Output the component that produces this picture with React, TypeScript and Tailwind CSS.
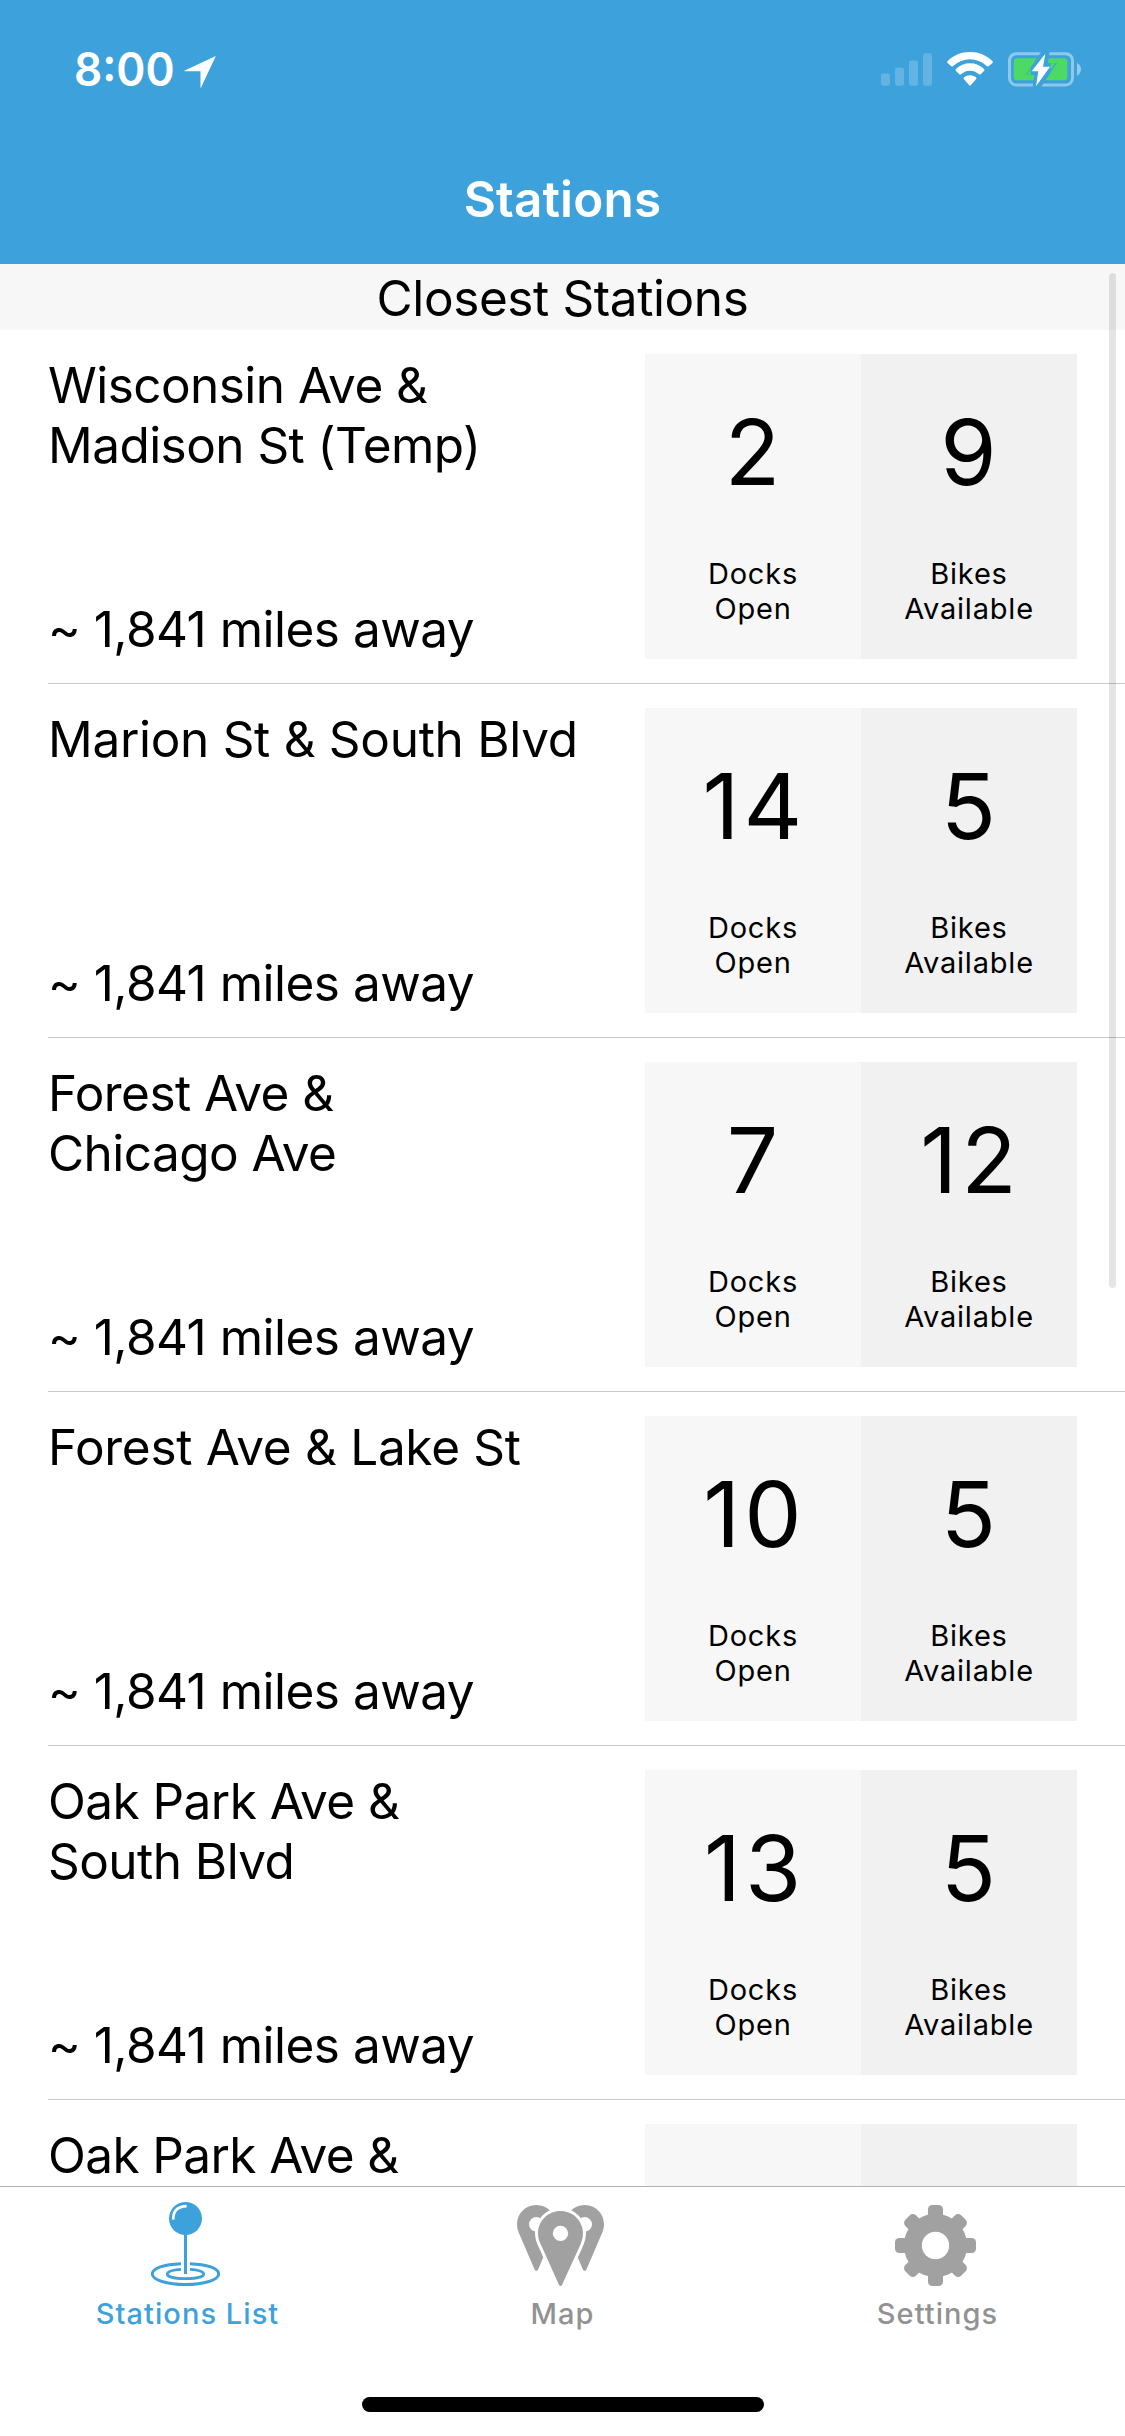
import React from "react";

type Station = { name: string; docks?: number; bikes?: number };

const stations: Station[] = [
  { name: "Wisconsin Ave &\nMadison St (Temp)", docks: 2, bikes: 9 },
  { name: "Marion St & South Blvd", docks: 14, bikes: 5 },
  { name: "Forest Ave &\nChicago Ave", docks: 7, bikes: 12 },
  { name: "Forest Ave & Lake St", docks: 10, bikes: 5 },
  { name: "Oak Park Ave &\nSouth Blvd", docks: 13, bikes: 5 },
  { name: "Oak Park Ave &" },
];

function LocationArrow() {
  return (
    <svg className="h-8 w-8" viewBox="551 167 95 96" fill="white">
      <path d="M646 167 L551 211 L553 213 H600 V263 L602 261 Z" />
    </svg>
  );
}

function SignalBars() {
  return (
    <svg className="h-[35px] w-[51px]" viewBox="243 156 153 102" fill="white" fillOpacity="0.2">
      <rect x="243" y="219" width="27" height="37" rx="7" />
      <rect x="285" y="201" width="27" height="55" rx="7" />
      <rect x="327" y="180" width="27" height="76" rx="7" />
      <rect x="369" y="158" width="27" height="98" rx="7" />
    </svg>
  );
}

function WifiIcon() {
  return (
    <svg className="h-[35px] w-[46px]" viewBox="441 155 138 105" fill="white">
      <path d="M510 155 C536 155 560 165 577 182 Q580 185 577 188 L566 198 Q563 200 560 197 Q538 177 510 177 Q482 177 460 197 Q457 200 454 198 L443 188 Q440 185 443 182 C460 165 484 155 510 155 Z" />
      <path d="M510 189 C526 189 541 195 552 206 Q555 209 552 212 L542 222 Q539 224 536 221 Q525 211 510 211 Q495 211 484 221 Q481 224 478 222 L468 212 Q465 209 468 206 C479 195 494 189 510 189 Z" />
      <path d="M510 225 C517 225 523 227 528 231 Q531 234 528 237 L513 254 Q510 257 507 254 L492 237 Q489 234 492 231 C497 227 503 225 510 225 Z" />
    </svg>
  );
}

function BatteryIcon() {
  return (
    <svg className="h-[35px] w-[73px]" viewBox="624 155 219 105">
      <rect x="628.5" y="160" width="189" height="94" rx="20" fill="none" stroke="white" strokeOpacity="0.42" strokeWidth="9" />
      <path d="M831 188 C847 196 847 217 831 226 Z" fill="white" fillOpacity="0.45" />
      <rect x="641" y="174" width="161" height="66" rx="11" fill="#4cd964" />
      <path d="M729 146 L677 224 H703 L697 268 H718 L771 188 H744 L750 146 Z" fill="#3da2dc" />
      <path d="M679 223 L693 204 L692 223 Z M766 189 L752 209 L752 189 Z" fill="#4cd964" />
      <path d="M736 160 L695 213 H715 L708 258 L750 199 H729 Z" fill="white" />
    </svg>
  );
}

function PinIcon() {
  return (
    <svg className="h-[84px] w-[69px]" viewBox="273 66 207 252" fill="none" stroke="currentColor">
      <circle cx="376.5" cy="115.5" r="49.5" fill="currentColor" stroke="none" />
      <path d="M340 119 Q338 80 380 78.500" stroke="white" strokeWidth="8" />
      <path d="M376.500 160 V282" strokeWidth="9" />
      <path d="M363 251 C312 253 277 265 277 282 C277 300 321 313.500 376.500 313.500 C432 313.500 476 300 476 282 C476 265 441 253 390 251" strokeWidth="9" />
      <path d="M363 268 C337 270 322 274 322 282 C322 291 345 296 376.500 296 C408 296 431 291 431 282 C431 274 416 270 390 268" strokeWidth="8.500" />
    </svg>
  );
}

function MapPinsIcon() {
  const sidePin =
    "M169 75 C136 75 111 101 111 133 C111 146 115 157 121 169 L164 269 Q169 276 174 269 L217 169 C223 157 227 146 227 133 C227 101 202 75 169 75 Z M169 111 A22 22 0 1 1 169 155 A22 22 0 1 1 169 111 Z";
  const frontPin =
    "M241.500 93 C204 93 174 123 174 160 C174 175 179 188 186 201 L237 315 Q241.500 321 246 315 L298 201 C304 188 309 175 309 160 C309 123 279 93 241.500 93 Z";
  return (
    <svg className="h-[84px] w-[87px]" viewBox="111 66 261 252" fill="currentColor">
      <path d={sidePin} fillRule="evenodd" />
      <path d={sidePin} fillRule="evenodd" transform="translate(483 0) scale(-1 1)" />
      <path d={frontPin} stroke="white" strokeWidth="18" />
      <path d={frontPin} />
      <circle cx="241.500" cy="160" r="23" fill="white" />
    </svg>
  );
}

function GearIcon() {
  const angles = [0, 45, 90, 135];
  return (
    <svg className="h-[84px] w-[81px]" viewBox="135 66 243 252" fill="currentColor">
      <circle cx="256.500" cy="196.500" r="95" />
      {angles.map((a) => (
        <rect
          key={a}
          x="234"
          y={a % 90 === 0 ? 75 : 78}
          width="45"
          height={a % 90 === 0 ? 243 : 237}
          rx="13"
          transform={`rotate(${a} 256.5 196.5)`}
        />
      ))}
      <circle cx="256.500" cy="196.500" r="41" fill="white" />
    </svg>
  );
}

function Count({ value, label, shade }: { value?: number; label: string; shade: string }) {
  return (
    <div className={`w-[216px] text-center ${shade}`}>
      {value !== undefined && (
        <>
          <div className="h-[202px] pl-[3px] text-[91px] leading-[196px] tracking-[4px]">{value}</div>
          <div className="text-[29px] leading-[35px] tracking-[0.8px] whitespace-pre-line">{label}</div>
        </>
      )}
    </div>
  );
}

function StationRow({ station }: { station: Station }) {
  return (
    <li className="ml-12 flex h-[354px] shrink-0 justify-between border-b border-[#c8c8c8] pt-6 pr-12 pb-6">
      <div className="flex flex-col justify-between pt-px text-[49.5px] leading-[60px]">
        <h2
          className={`whitespace-pre-line ${
            station.name.includes("\n") ? "tracking-[-0.55px]" : station.docks ? "tracking-[-0.3px]" : "tracking-[-0.6px]"
          }`}
        >
          {station.name}
        </h2>
        {station.docks !== undefined && <p className="tracking-[-0.5px]">~ 1,841 miles away</p>}
      </div>
      <div className="flex">
        <Count value={station.docks} label={"Docks\nOpen"} shade="bg-[#f7f7f7]" />
        <Count value={station.bikes} label={"Bikes\nAvailable"} shade="bg-[#f1f1f1]" />
      </div>
    </li>
  );
}

function Tab({ icon, label, color }: { icon: React.ReactNode; label: string; color: string }) {
  return (
    <div className={`flex flex-1 flex-col items-center pt-[15px] ${color}`}>
      <div className="pr-1">{icon}</div>
      <span className="mt-[9px] text-[29px] leading-[37px] font-medium tracking-[1.05px]">{label}</span>
    </div>
  );
}

export default function App() {
  return (
    <div className="flex h-[2436px] w-[1125px] flex-col overflow-hidden bg-white font-['Inter',sans-serif] text-black">
      <header className="h-[264px] shrink-0 bg-[#3da2dc] text-white">
        <div className="flex h-[132px] justify-between pr-[44px] pl-[74px]">
          <div className="flex">
            <span className="w-[110px] origin-left scale-x-[0.95] text-[46.5px] leading-[138px] font-semibold">8:00</span>
            <span className="mt-[56px]">
              <LocationArrow />
            </span>
          </div>
          <div className="flex pt-[52px]">
            <SignalBars />
            <span className="ml-[15px]">
              <WifiIcon />
            </span>
            <span className="ml-[15px]">
              <BatteryIcon />
            </span>
          </div>
        </div>
        <h1 className="h-[132px] text-center text-[49.5px] leading-[134px] font-semibold tracking-[0.15px]">Stations</h1>
      </header>

      <main className="relative flex min-h-0 flex-1 flex-col overflow-hidden">
        <div className="h-[66px] shrink-0 bg-[#f7f7f7] text-center text-[49.5px] leading-[68px] tracking-[-0.4px]">
          Closest Stations
        </div>
        <ul className="flex flex-col">
          {stations.map((s, i) => (
            <StationRow key={i} station={s} />
          ))}
        </ul>
        <div className="absolute top-[9px] right-[9px] h-[1015px] w-[7px] rounded-full bg-black/10" />
      </main>

      <nav className="flex h-[250px] shrink-0 flex-col items-center border-t border-[#b2b2b2] bg-white">
        <div className="flex h-[210px] w-full">
          <Tab icon={<PinIcon />} label="Stations List" color="text-[#3da2dc]" />
          <Tab icon={<MapPinsIcon />} label="Map" color="text-[#a1a1a1] [&>span]:text-[#929292]" />
          <Tab icon={<GearIcon />} label="Settings" color="text-[#a1a1a1] [&>span]:text-[#929292]" />
        </div>
        <div className="h-[15px] w-[402px] rounded-full bg-black" />
      </nav>
    </div>
  );
}
